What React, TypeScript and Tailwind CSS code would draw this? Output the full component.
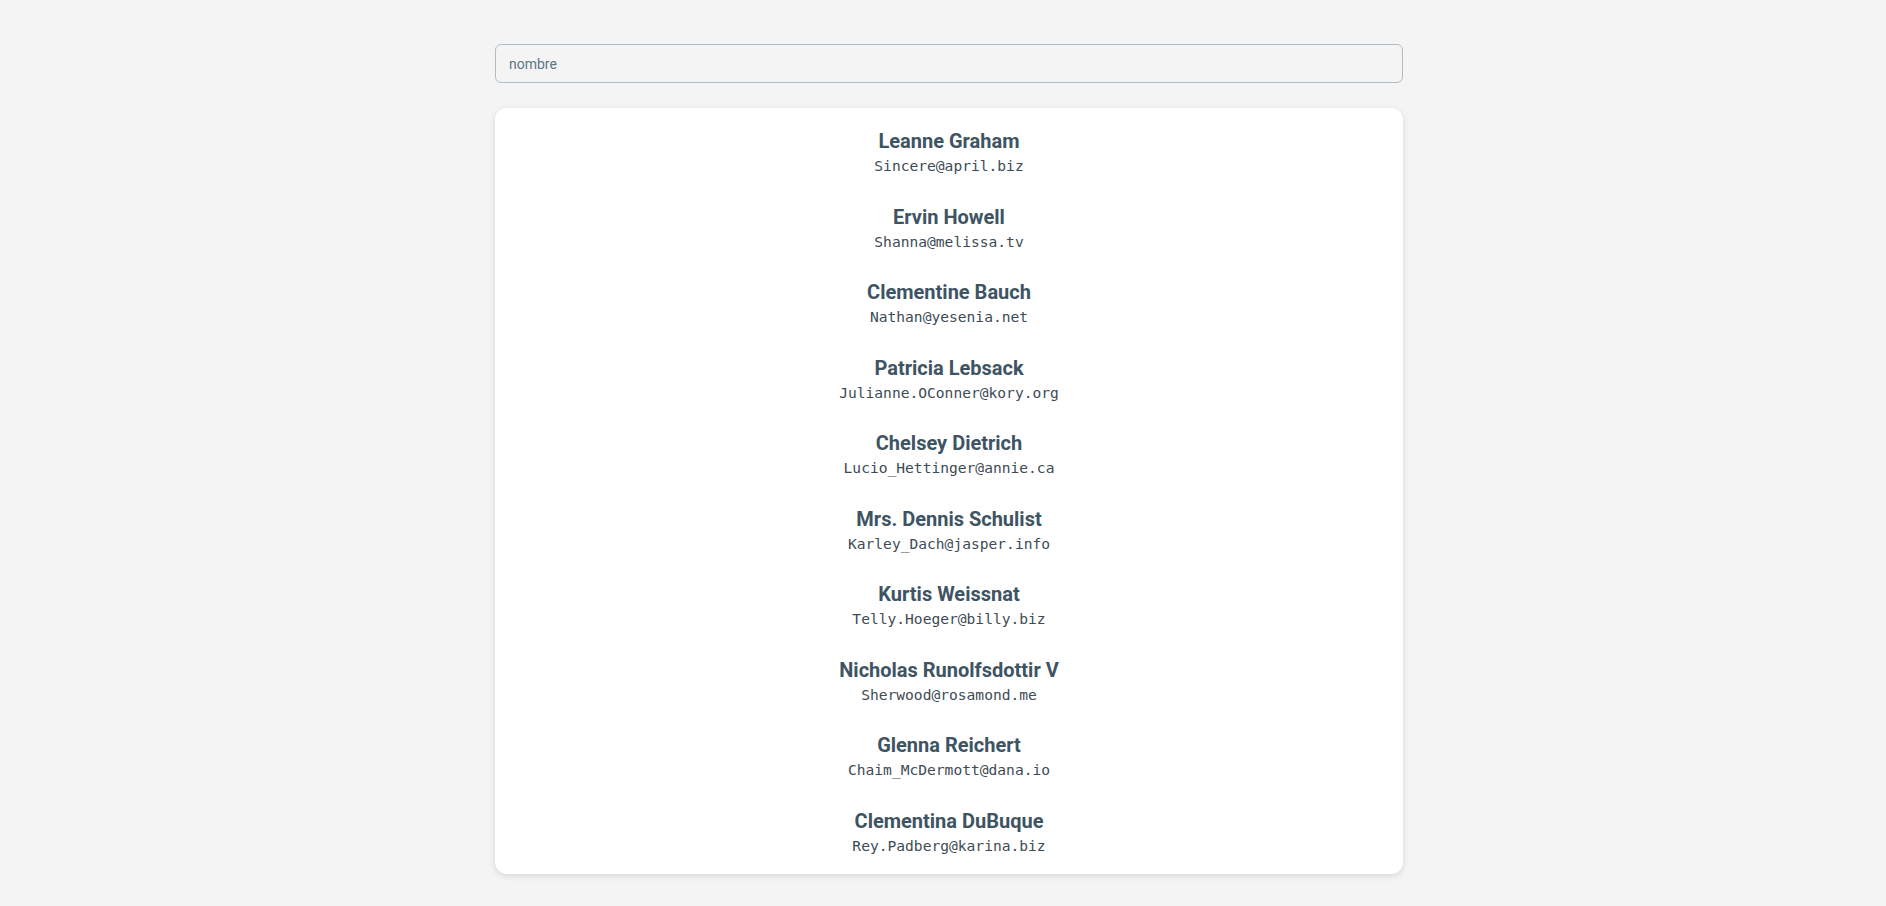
const users = [
  { name: 'Leanne Graham', email: 'Sincere@april.biz' },
  { name: 'Ervin Howell', email: 'Shanna@melissa.tv' },
  { name: 'Clementine Bauch', email: 'Nathan@yesenia.net' },
  { name: 'Patricia Lebsack', email: 'Julianne.OConner@kory.org' },
  { name: 'Chelsey Dietrich', email: 'Lucio_Hettinger@annie.ca' },
  { name: 'Mrs. Dennis Schulist', email: 'Karley_Dach@jasper.info' },
  { name: 'Kurtis Weissnat', email: 'Telly.Hoeger@billy.biz' },
  { name: 'Nicholas Runolfsdottir V', email: 'Sherwood@rosamond.me' },
  { name: 'Glenna Reichert', email: 'Chaim_McDermott@dana.io' },
  { name: 'Clementina DuBuque', email: 'Rey.Padberg@karina.biz' },
]

function App() {
  return (
    <div className="min-h-screen bg-[#f4f4f4] pt-[44px] pb-4 pl-[12px] font-['Roboto',sans-serif]">
      <div className="mx-auto w-[908px] flex flex-col gap-[25px]">
        {/* Search */}
        <input
          type="text"
          placeholder="nombre"
          className="h-[39px] w-full rounded-[6px] border border-[#aebdc6] bg-[#f4f4f4] px-[13px] text-[14px] text-[#40566a] placeholder:text-[#5d7585] outline-none"
        />

        {/* User list */}
        <ul className="flex flex-col gap-[25.5px] rounded-[12px] bg-white pt-[19px] pb-[17.5px] shadow-[0_2px_6px_rgba(0,0,0,0.12)]">
          {users.map(user => (
            <li key={user.email} className="flex flex-col items-center">
              <h2 className="text-[20px] leading-[28px] font-bold text-[#3e5463]">{user.name}</h2>
              <p className="font-['DejaVu_Sans_Mono',monospace] text-[14.6px] leading-[22px] text-[#3e4b55]">
                {user.email}
              </p>
            </li>
          ))}
        </ul>
      </div>
    </div>
  )
}

export default App
